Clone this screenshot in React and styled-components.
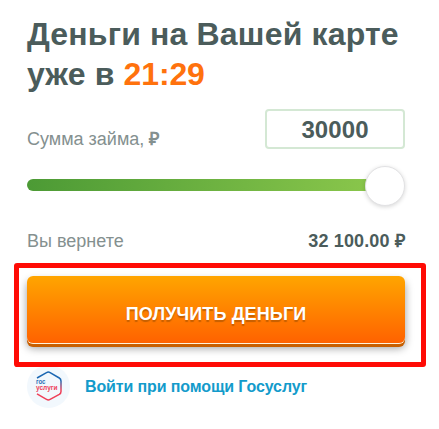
import React from 'react'
import styled, { createGlobalStyle } from 'styled-components'

const GlobalStyle = createGlobalStyle`
    body {
        margin: 0;
        background: #fff;
        font-family: "Liberation Sans", Arial, Helvetica, sans-serif;
    }
    *, *::after {
        box-sizing: border-box;
    }
`

const Card = styled.main`
    width: 439px;
    height: 429px;
    padding: 14px 34px 0 27px;
    overflow: hidden;
`

const Title = styled.h1`
    margin: 0;
    color: #4b5c5b;
    font-size: 32px;
    font-weight: bold;
    line-height: 40px;
    white-space: nowrap;
`

const Line = styled.span`
    display: block;
    letter-spacing: ${props => props.$spacing || 0}px;
`

const Time = styled.span`
    color: #ff720d;
    letter-spacing: -0.15px;
`

const Row = styled.div`
    display: flex;
    justify-content: space-between;
    align-items: ${props => props.$align || "center"};
    height: ${props => props.$height}px;
    margin-top: ${props => props.$gap}px;
`

const Label = styled.span`
    color: #84908f;
    font-size: 18px;
    line-height: 20px;
    white-space: nowrap;
`

const Ruble = styled.b`
    font-size: 18px;
`

const Amount = styled.input`
    width: 140px;
    height: 40px;
    padding: 1px 0 0;
    border: 2px solid #d4e8d4;
    border-radius: 4px;
    outline: none;
    background: #fff;
    color: #4b5c5b;
    font: bold 24px "Liberation Sans", Arial, sans-serif;
    letter-spacing: 0.1px;
    text-align: center;
`

const Slider = styled.div`
    display: flex;
    align-items: center;
    height: 40px;
    margin-top: 17px;
`

const Track = styled.div`
    flex: 1;
    height: 12px;
    margin: 0 -20px 2px 0;
    border-radius: 6px;
    background: linear-gradient(to right, #4c9a35, #8cc84c);
`

const Knob = styled.div`
    width: 40px;
    height: 40px;
    border: 1px solid #e2e2e4;
    border-radius: 50%;
    background: #fff;
    box-shadow: 0 1px 4px rgba(0, 0, 0, 0.16);
    z-index: 1;
`

const Total = styled.b`
    color: #4b5c5b;
    font-size: 18px;
    line-height: 20px;
    letter-spacing: 0.15px;
    white-space: nowrap;
`

const Marked = styled.div`
    position: relative;
    margin-top: 25px;

    &::after {
        content: "";
        position: absolute;
        top: -13px;
        left: -13px;
        width: 412px;
        height: 104px;
        border: 5px solid #ff0b05;
        border-radius: 3px;
        pointer-events: none;
    }
`

const Button = styled.button`
    display: block;
    width: 378px;
    height: 67px;
    padding: 10px 0 0;
    border: none;
    border-radius: 6px;
    background: linear-gradient(to bottom, #ffa500, #ff6200);
    box-shadow: 0 1px 0 #fff3dc, 0 4px 0 #c85f00, 0 5px 8px rgba(0, 0, 0, 0.4);
    color: #fff;
    font: bold 18px "Liberation Sans", Arial, sans-serif;
    letter-spacing: 0.12px;
    text-shadow: 0 2px 1px rgba(150, 75, 0, 0.55);
`

const Login = styled.a`
    display: flex;
    align-items: center;
    gap: 15px;
    margin-top: 22px;
    color: #139bcb;
    font-size: 16px;
    font-weight: bold;
    letter-spacing: -0.12px;
    text-decoration: none;
    white-space: nowrap;
`

const Badge = styled.svg`
    flex: none;
    width: 43px;
    height: 43px;
    letter-spacing: 0;
`

const BadgeText = styled.text`
    font: bold 6.7px "Liberation Sans", Arial, sans-serif;
`

function GosLogo() {
    return (
        <Badge viewBox="0 0 43 43">
            <defs>
                <linearGradient id="side" x1="0" y1="0" x2="0" y2="1">
                    <stop offset="0.3" stopColor="#1b67b2" />
                    <stop offset="0.65" stopColor="#ee3f58" />
                </linearGradient>
            </defs>
            <circle cx="21.5" cy="21.5" r="21.5" fill="#f2f8fd" />
            <path
                d="M10 13 L19.5 7.6 Q21.3 6.6 23.1 7.6 L32.3 13 Q34 14 34 16 V26.4 Q34 28.4 32.3 29.4 L23.1 34.4 Q21.3 35.4 19.5 34.4 L10 28.9"
                fill="none"
                stroke="url(#side)"
                strokeWidth="1.5"
            />
            <BadgeText x="9" y="19.3" fill="#2f73b7" textLength="9.5" lengthAdjust="spacingAndGlyphs">гос</BadgeText>
            <BadgeText x="9" y="25.4" fill="#ee3f58" textLength="21.5" lengthAdjust="spacingAndGlyphs">услуги</BadgeText>
        </Badge>
    )
}

function App() {
    return (
        <>
            <GlobalStyle />
            <Card>
                <Title>
                    <Line $spacing={0.17}>Деньги на Вашей карте</Line>
                    <Line $spacing={0.15}>уже в <Time>21:29</Time></Line>
                </Title>

                <Row $height={40} $gap={15} $align="flex-end">
                    <Label>Сумма займа, <Ruble>₽</Ruble></Label>
                    <Amount defaultValue="30000" />
                </Row>

                <Slider>
                    <Track />
                    <Knob />
                </Slider>

                <Row $height={20} $gap={25}>
                    <Label>Вы вернете</Label>
                    <Total>32 100.00 ₽</Total>
                </Row>

                <Marked>
                    <Button>ПОЛУЧИТЬ ДЕНЬГИ</Button>
                </Marked>

                <Login>
                    <GosLogo />
                    Войти при помощи Госуслуг
                </Login>
            </Card>
        </>
    )
}

export default App
